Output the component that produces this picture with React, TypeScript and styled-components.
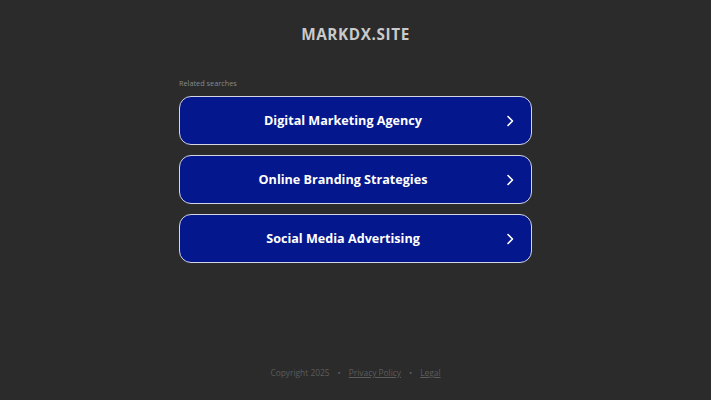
import React from 'react'
import styled, { createGlobalStyle } from 'styled-components'

const GlobalStyle = createGlobalStyle`
  html, body {
    margin: 0;
    padding: 0;
    background-color: #2b2b2b;
    font-family: 'Open Sans', 'Liberation Sans', sans-serif;
  }
`

const Page = styled.div`
  display: flex;
  flex-direction: column;
  align-items: center;
  height: 400px;
  box-sizing: border-box;
  padding-top: 24px;
`

const Domain = styled.h1`
  margin: 0;
  font-size: 15.3px;
  font-weight: 700;
  letter-spacing: 0.6px;
  color: #cacaca;
  line-height: 20px;
`

const Related = styled.div`
  width: 353px;
  margin-top: 34px;
  display: flex;
  flex-direction: column;
`

const RelatedLabel = styled.div`
  font-size: 7.3px;
  color: #8a8a8a;
  line-height: 10px;
  margin-bottom: 8px;
`

const LinkList = styled.div`
  display: flex;
  flex-direction: column;
  gap: 10px;
`

const LinkButton = styled.a`
  position: relative;
  display: flex;
  align-items: center;
  justify-content: center;
  height: 49px;
  box-sizing: border-box;
  padding-right: 25px;
  border: 1.5px solid #d4d6e2;
  border-radius: 12px;
  background-color: #05178c;
  color: #ffffff;
  font-size: 12.6px;
  font-weight: 700;
  text-decoration: none;
  cursor: pointer;
`

const Chevron = styled.svg`
  position: absolute;
  right: 15px;
  top: 50%;
  margin-top: -6px;
  width: 12px;
  height: 12px;
`

const Footer = styled.div`
  margin-top: auto;
  margin-bottom: 22px;
  display: flex;
  gap: 8px;
  font-size: 8.4px;
  color: #5c5c5c;
  line-height: 10px;
`

const FooterLink = styled.a`
  color: #5c5c5c;
  text-decoration: underline;
`

const searches = [
  'Digital Marketing Agency',
  'Online Branding Strategies',
  'Social Media Advertising',
]

const App = () => {
  return (
    <>
      <GlobalStyle />
      <Page>
        <Domain>MARKDX.SITE</Domain>
        <Related>
          <RelatedLabel>Related searches</RelatedLabel>
          <LinkList>
            {searches.map((s) => (
              <LinkButton key={s}>
                {s}
                <Chevron viewBox="0 0 12 12" fill="none">
                  <path d="M4 1.5 L8.5 6 L4 10.5" stroke="#ffffff" strokeWidth="1.6" strokeLinecap="round" strokeLinejoin="round" />
                </Chevron>
              </LinkButton>
            ))}
          </LinkList>
        </Related>
        <Footer>
          <span>Copyright 2025</span>
          <span>•</span>
          <FooterLink>Privacy Policy</FooterLink>
          <span>•</span>
          <FooterLink>Legal</FooterLink>
        </Footer>
      </Page>
    </>
  )
}

export default App
